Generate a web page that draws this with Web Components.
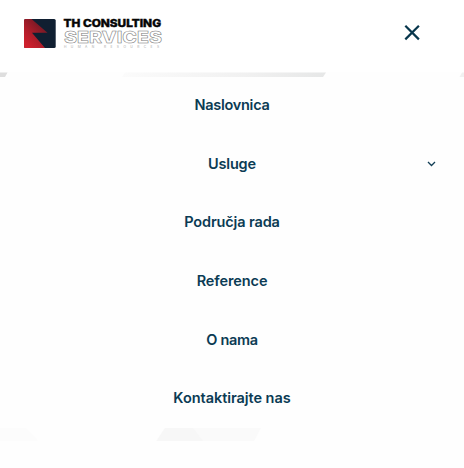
<!DOCTYPE html>
<html lang="hr">
<head>
<meta charset="utf-8">
<title>TH Consulting Services</title>
<style>
html,body{margin:0;height:100%;overflow:hidden;background:#fff}
body{font-family:Inter,"Open Sans",sans-serif;color:#0b3b54}
</style>
</head>
<body>
<mobile-page>
  <site-header slot="header"><brand-logo></brand-logo><close-button></close-button></site-header>
  <nav-menu>
    <nav-item style="--track:-.27px">Naslovnica</nav-item>
    <nav-item arrow style="--track:-.2px">Usluge</nav-item>
    <nav-item style="--track:-.14px">Područja rada</nav-item>
    <nav-item style="--track:-.1px">Reference</nav-item>
    <nav-item style="--track:-.3px">O nama</nav-item>
    <nav-item style="--track:-.05px">Kontaktirajte nas</nav-item>
  </nav-menu>
</mobile-page>
<script>
function define(name, markup) {
  customElements.define(name, class extends HTMLElement {
    constructor() {
      super();
      this.attachShadow({mode: 'open'}).innerHTML = markup;
    }
  });
}
define('mobile-page', `<style>
:host{display:flex;flex-direction:column;width:464px;height:468px;position:relative;background:#fefefe}
.bands{position:absolute;inset:0;z-index:0}
</style>
<svg class="bands" width="464" height="468" viewBox="0 0 464 468" aria-hidden="true">
  <defs><linearGradient id="g"><stop stop-color="#fbfbfb"/><stop offset=".6" stop-color="#f1f1f1"/><stop offset="1" stop-color="#e6e7e7"/></linearGradient></defs>
  <path d="M0 72.400H7.500L5 76.900H0Z" fill="#dedede"/>
  <path d="M125 72.400H326L323 76.900H122Z" fill="url(#g)"/>
  <path d="M462 72.400H464V76.900H459.500Z" fill="#f1f1f1"/>
  <path d="M0 428H26L38 441H0Z" fill="#fcfcfc"/>
  <path d="M165 428H261L254 441H156.500Z" fill="#fafafa"/>
  <path d="M165 428H193L203 441H156.500Z" fill="#f7f7f7"/>
</svg><slot name="header"></slot><slot></slot>`);
define('site-header', `<style>
:host{display:flex;box-sizing:border-box;height:72px;padding:17px 41px 0 22px;justify-content:space-between;align-items:flex-start;background:#fff;position:relative}
</style><slot></slot>`);
define('brand-logo', `<style>:host{display:block;width:142px;height:34px}svg{display:block}text{font-family:Inter,sans-serif}</style>
<svg width="142" height="34" viewBox="22 17 142 34" role="img" aria-label="TH Consulting Services">
  <defs><linearGradient id="r" gradientUnits="userSpaceOnUse" x1="24" y1="42" x2="41" y2="26"><stop stop-color="#cf202d"/><stop offset=".45" stop-color="#b01d2a"/><stop offset="1" stop-color="#7a1925"/></linearGradient></defs>
  <rect x="24" y="19" width="31.700" height="29" rx="1.500" fill="#101f31"/>
  <path d="M25.500 19H31.500L47.500 32.800H32L45 48H25.500Q24 48 24 46.500V20.500Q24 19 25.500 19Z" fill="url(#r)"/>
  <text x="63.500" y="27" font-size="10.400" font-weight="800" fill="#050505" stroke="#050505" stroke-width=".4" textLength="97.500" lengthAdjust="spacingAndGlyphs">TH CONSULTING</text>
  <text x="64" y="42.800" font-size="16.600" font-weight="800" fill="#fff" stroke="#777" stroke-width=".5" textLength="98" lengthAdjust="spacingAndGlyphs">SERVICES</text>
  <text x="64" y="48.200" font-size="3.300" fill="#aaa" textLength="95" lengthAdjust="spacing">HUMAN RESOURCES</text>
</svg>`);
define('close-button', `<style>:host{display:block;width:21px;height:30px}svg{display:block}</style>
<svg width="21" height="31" viewBox="402 17 21 31" role="img" aria-label="Zatvori"><path d="M405.300 25.800L418.900 39.400M418.900 25.800L405.300 39.400" stroke="#07364c" stroke-width="2.200" fill="none"/></svg>`);
define('nav-menu', `<style>
:host{display:grid;grid-template-rows:repeat(6,58.670px);padding-top:3.800px;position:relative}
</style><slot></slot>`);
define('nav-item', `<style>
:host{display:grid;grid-template-columns:1fr auto 1fr;align-items:center;padding:0 27px;font-size:14.500px;font-weight:600;line-height:20px;letter-spacing:var(--track,0)}
span{grid-column:2;white-space:nowrap}
svg{display:none;grid-column:3;justify-self:end}
:host([arrow]) svg{display:block}
</style><span><slot></slot></span>
<svg width="11" height="8" viewBox="0 0 11 8" aria-hidden="true"><path d="M2 2L5.500 5.500L9 2" stroke="#123e56" stroke-width="1.300" fill="none"/></svg>`);
</script>
</body>
</html>
